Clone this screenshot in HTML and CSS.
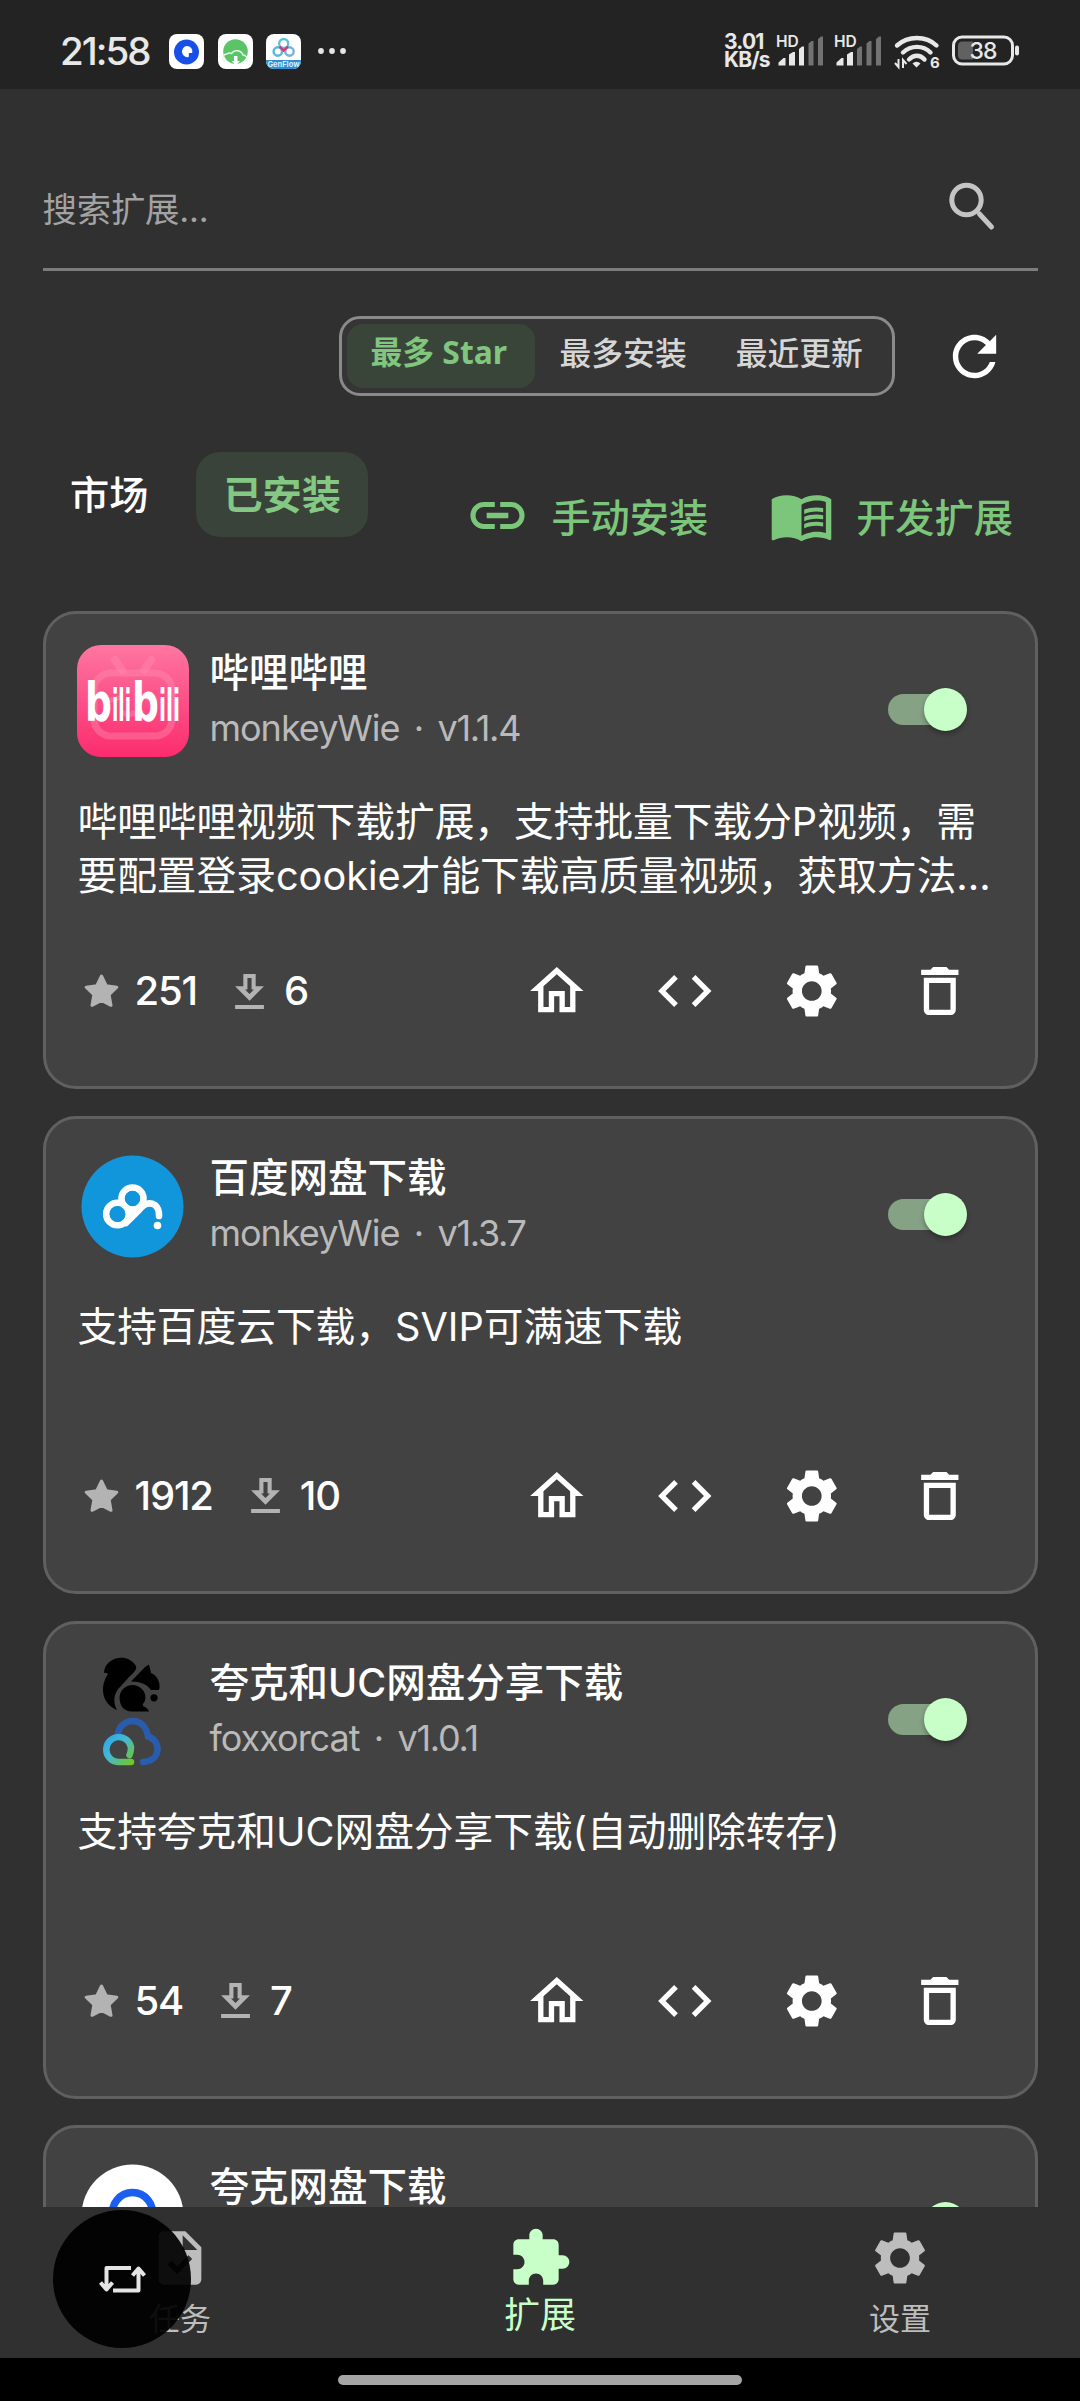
FILE: index.html
```html
<!DOCTYPE html>
<html lang="zh-CN">
<head>
<meta charset="utf-8">
<title>扩展</title>
<link rel="stylesheet" href="styles.css">
</head>
<body>
<svg class="sprite" aria-hidden="true">
  <symbol id="i-home" viewBox="0 0 24 24"><path d="M12 5.69l5 4.5V18h-2v-6H9v6H7v-7.81l5-4.5M12 3L2 12h3v8h6v-6h2v6h6v-8h3L12 3z"/></symbol>
  <symbol id="i-code" viewBox="0 0 24 24"><path d="M9.4 16.6L4.8 12l4.6-4.6L8 6l-6 6 6 6 1.4-1.4zm5.2 0l4.6-4.6-4.6-4.6L16 6l6 6-6 6-1.4-1.4z"/></symbol>
  <symbol id="i-gear" viewBox="0 0 24 24"><path d="M19.14 12.94c.04-.3.06-.61.06-.94 0-.32-.02-.64-.07-.94l2.03-1.58c.18-.14.23-.41.12-.61l-1.92-3.32c-.12-.22-.37-.29-.59-.22l-2.39.96c-.5-.38-1.03-.7-1.62-.94l-.36-2.54c-.04-.24-.24-.41-.48-.41h-3.84c-.24 0-.43.17-.47.41l-.36 2.54c-.59.24-1.13.57-1.62.94l-2.39-.96c-.22-.08-.47 0-.59.22L2.74 8.87c-.12.21-.08.47.12.61l2.03 1.58c-.05.3-.09.63-.09.94s.02.64.07.94l-2.03 1.58c-.18.14-.23.41-.12.61l1.92 3.32c.12.22.37.29.59.22l2.39-.96c.5.38 1.03.7 1.62.94l.36 2.54c.05.24.24.41.48.41h3.84c.24 0 .44-.17.47-.41l.36-2.54c.59-.24 1.13-.56 1.62-.94l2.39.96c.22.08.47 0 .59-.22l1.92-3.32c.12-.22.07-.47-.12-.61l-2.01-1.58zM12 15.7c-2.05 0-3.7-1.65-3.7-3.7s1.65-3.7 3.7-3.7 3.7 1.65 3.7 3.7-1.65 3.7-3.7 3.7z"/></symbol>
  <symbol id="i-trash" viewBox="0 0 24 24"><path d="M6 19c0 1.1.9 2 2 2h8c1.1 0 2-.9 2-2V7H6v12zM8 9h8v10H8V9zm7.5-5l-1-1h-5l-1 1H5v2h14V4z"/></symbol>
  <symbol id="i-star" viewBox="0 0 35 34"><path d="M17.5 2l4.7 9.7 10.6 1.5-7.7 7.4 1.9 10.7-9.5-5-9.5 5 1.9-10.700L2.200 13.200l10.600-1.500z" stroke="currentColor" stroke-width="3" stroke-linejoin="round"/></symbol>
  <symbol id="i-down" viewBox="5 3 14 17"><path d="M19 9h-4V3H9v6H5l7 7 7-7zm-8 1.500V5h2v5.500h1.170L12 12.670 9.830 10.500H11zM5 18h14v2H5z"/></symbol>
</svg>

<div class="phone">
  <header class="status">
    <span class="clock">21:58</span>
    <div class="notif">
      <svg width="35" height="35" viewBox="0 0 35 35"><rect width="35" height="35" rx="8" fill="#fff"/><circle cx="17.5" cy="18" r="12.5" fill="#1650e8"/><path d="M17.5 12a5.600 5.600 0 1 0 2.300 11v-4h3.500A5.600 5.600 0 0 0 17.500 12z" fill="#fff"/></svg>
      <svg width="35" height="35" viewBox="0 0 35 35"><rect width="35" height="35" rx="8" fill="#fff"/><circle cx="17.5" cy="17.5" r="12.3" fill="#5cc468"/><path d="M7 27.500a4 4 0 0 1 2-7.500 4 4 0 0 1 4.500-.5 6.500 6.500 0 0 1 11.500 1.500 4 4 0 0 1 3.500 6" fill="none" stroke="#e9f9ea" stroke-width="1.4"/><path d="M16 22h3.500v5h2.500l-4.200 4.500-4.200-4.500H16z" fill="#fff"/></svg>
      <svg width="35" height="35" viewBox="0 0 35 35"><defs><clipPath id="gf"><rect width="35" height="35" rx="8"/></clipPath></defs><g clip-path="url(#gf)"><rect width="35" height="35" fill="#fff"/><rect y="26" width="35" height="9" fill="#2f8fd0"/><g fill="none" stroke-width="2.4"><circle cx="11.8" cy="17.5" r="4.2" stroke="#58b8dc"/><circle cx="23.5" cy="17.5" r="4.2" stroke="#7aaee0"/><circle cx="17.7" cy="9.5" r="4.5" stroke="#5cc3d6"/><path d="M13.500 12.500l4.200 4 4.200-4" stroke="#cf3a78"/></g><text x="17.5" y="33" text-anchor="middle" class="gf-text">GenFlow</text></g></svg>
      <svg class="more" width="28" height="8" viewBox="0 0 28 8" fill="#e6e6e6"><circle cx="3" cy="4" r="2.9"/><circle cx="14" cy="4" r="2.9"/><circle cx="25" cy="4" r="2.9"/></svg>
    </div>
    <div class="sys">
      <div class="speed"><span>3.01</span><span>KB/s</span></div>
      <svg class="sig" width="50" height="34" viewBox="0 0 50 34"><text x="0" y="12.5" class="hd">HD</text><g fill="#e8e8e8"><path d="M2.500 31.500v-3l5-4.500h2v7.500zM13 31.500V20.500l4-2.500h2v13.500zM23 31.500V15l3-2.500h2v19z"/></g><g fill="#727272"><path d="M32.500 31.500V9.500l3-2.500h2v24.500zM42 31.500V5l3-2.500h2v29z"/></g></svg>
      <svg class="sig" width="50" height="34" viewBox="0 0 50 34"><text x="0" y="12.5" class="hd">HD</text><g fill="#e8e8e8"><path d="M2.500 31.500v-3l5-4.500h2v7.500zM13 31.500V20.500l4-2.500h2v13.500z"/></g><g fill="#727272"><path d="M23 31.500V15l3-2.500h2v19zM32.500 31.500V9.500l3-2.500h2v24.500zM42 31.500V5l3-2.500h2v29z"/></g></svg>
      <svg class="wifi" width="46" height="35" viewBox="0 0 46 35"><g fill="none" stroke="#e8e8e8" stroke-width="4.4" stroke-linecap="round"><path d="M3 11.500C14 1.500 32 1.500 42.500 11.500"/><path d="M9 18.500C17 11 29 11 36.500 18.500"/><path d="M15 25.500C20 20.500 26 20.500 30.500 25.500"/></g><path d="M18.500 29.500a5.600 5.600 0 0 1 8 0l-4 4z" fill="#e8e8e8"/><path d="M4.500 25v8l-3.500-4M9 34v-8l3.500 4" fill="none" stroke="#e8e8e8" stroke-width="2"/><text x="36" y="34" class="six">6</text></svg>
      <svg class="batt" width="68" height="32" viewBox="0 0 68 32"><rect x="1.5" y="2" width="59" height="27" rx="8.5" fill="none" stroke="#e8e8e8" stroke-width="3"/><path d="M6 11q0-4.500 4.500-4.500H21v18H10.500Q6 24.500 6 20z" fill="#616161"/><rect x="63" y="10.5" width="4" height="10" rx="2" fill="#e8e8e8"/><text x="31" y="24.3" text-anchor="middle" class="pct">38</text></svg>
    </div>
  </header>

  <main class="page">
    <div class="search">
      <span class="placeholder">搜索扩展...</span>
      <svg class="mag" width="48" height="50" viewBox="0 0 48 50" fill="none" stroke="#c4c4c4" stroke-width="5"><circle cx="18.5" cy="19" r="14.7"/><path d="M31.500 33l12 13" stroke-linecap="round"/></svg>
    </div>

    <div class="filters">
      <div class="segment">
        <span class="seg on">最多 Star</span>
        <span class="seg">最多安装</span>
        <span class="seg">最近更新</span>
      </div>
      <svg class="refresh" viewBox="0 0 24 24" fill="#fff"><path d="M17.650 6.350C16.200 4.900 14.210 4 12 4c-4.420 0-7.990 3.580-7.990 8s3.570 8 7.990 8c3.730 0 6.840-2.550 7.730-6h-2.080c-.82 2.330-3.040 4-5.650 4-3.310 0-6-2.690-6-6s2.690-6 6-6c1.660 0 3.140.69 4.220 1.780L13 11h7V4l-2.350 2.350z"/></svg>
    </div>

    <div class="tabs">
      <span class="tab">市场</span>
      <span class="tab on">已安装</span>
      <a class="link manual"><svg viewBox="0 0 24 24"><path d="M3.900 12c0-1.710 1.390-3.100 3.100-3.100h4V7H7c-2.760 0-5 2.240-5 5s2.240 5 5 5h4v-1.900H7c-1.710 0-3.100-1.390-3.100-3.100zM8 13h8v-2H8v2zm9-6h-4v1.900h4c1.710 0 3.100 1.390 3.100 3.100s-1.390 3.100-3.100 3.100h-4V17h4c2.760 0 5-2.240 5-5s-2.240-5-5-5z"/></svg>手动安装</a>
      <a class="link dev"><svg viewBox="0 0 24 24"><path d="M21 5c-1.110-.35-2.330-.5-3.500-.5-1.950 0-4.050.4-5.500 1.500-1.450-1.100-3.550-1.500-5.500-1.500S2.450 4.900 1 6v14.650c0 .25.25.5.5.5.1 0 .15-.05.25-.05C3.100 20.450 5.050 20 6.500 20c1.950 0 4.050.4 5.500 1.500 1.350-.85 3.800-1.500 5.500-1.500 1.650 0 3.350.3 4.750 1.050.1.05.15.05.25.05.25 0 .5-.25.5-.5V6c-.6-.45-1.250-.75-2-1zm0 13.500c-1.100-.35-2.300-.5-3.500-.5-1.700 0-4.150.65-5.500 1.500V8c1.350-.85 3.800-1.500 5.500-1.500 1.200 0 2.400.15 3.500.5v11.500z"/><path d="M17.500 10.500c.88 0 1.730.09 2.500.26V9.240c-.79-.15-1.640-.24-2.500-.24-1.700 0-3.240.29-4.500.83v1.660c1.130-.64 2.700-.99 4.500-.99zM13 12.490v1.660c1.130-.64 2.700-.99 4.500-.99.88 0 1.730.09 2.500.26V11.900c-.79-.15-1.640-.24-2.500-.24-1.700 0-3.240.3-4.500.83zM17.500 14.330c-1.700 0-3.240.29-4.500.83v1.660c1.130-.64 2.700-.99 4.500-.99.88 0 1.730.09 2.500.26v-1.520c-.79-.16-1.640-.24-2.500-.24z"/></svg>开发扩展</a>
    </div>

    <section class="list">
      <article class="card">
        <div class="head">
          <svg class="logo" viewBox="0 0 112 112"><defs><linearGradient id="bg" x1="0" y1="0" x2="0" y2="1"><stop offset="0" stop-color="#ff76a1"/><stop offset=".5" stop-color="#fb5088"/><stop offset="1" stop-color="#fd2c6d"/></linearGradient></defs><rect width="112" height="112" rx="24" fill="url(#bg)"/><g fill="none" stroke="#ff8fb2" stroke-opacity=".4" stroke-width="7" stroke-linecap="round"><rect x="17" y="28" width="78" height="63" rx="17"/><path d="M38 15l7 10M74 15l-7 10" stroke-width="8"/><path d="M34 55l8-2M70 53l8 2M47 68q4 4 9 0q5 4 9 0" stroke-width="5"/></g><text class="bili" y="76"><tspan class="b" x="8" textLength="27" lengthAdjust="spacingAndGlyphs">b</tspan><tspan x="35" textLength="19" lengthAdjust="spacingAndGlyphs">ili</tspan><tspan class="b" x="55" textLength="27" lengthAdjust="spacingAndGlyphs">b</tspan><tspan x="82" textLength="21" lengthAdjust="spacingAndGlyphs">ili</tspan></text></svg>
          <div class="names"><h2>哔哩哔哩</h2><p><span>monkeyWie</span><i>·</i><span class="ver">v1.1.4</span></p></div>
          <span class="switch"></span>
        </div>
        <p class="desc">哔哩哔哩视频下载扩展，支持批量下载分P视频，需<br>要配置登录cookie才能下载高质量视频，获取方法...</p>
        <div class="foot">
          <svg class="star"><use href="#i-star"/></svg><b>251</b><svg class="down"><use href="#i-down"/></svg><b>6</b>
          <div class="acts"><svg><use href="#i-home"/></svg><svg><use href="#i-code"/></svg><svg><use href="#i-gear"/></svg><svg><use href="#i-trash"/></svg></div>
        </div>
      </article>

      <article class="card">
        <div class="head">
          <svg class="logo" viewBox="0 0 112 112"><circle cx="55.5" cy="56.5" r="51" fill="#1296db"/><g fill="none" stroke="#fff" stroke-width="6.6" stroke-linecap="round"><circle cx="55.5" cy="48.500" r="11"/><circle cx="40.500" cy="64" r="11.300"/><path d="M49 73L62 60Q70 50 78 55Q82.500 59 82 66"/></g><path d="M47 58l5 4 10-4 2 2-13 13z" fill="#fff"/><circle cx="55.500" cy="48.500" r="7.600" fill="#1296db"/><circle cx="40.500" cy="64" r="7.800" fill="#1296db"/><circle cx="80.500" cy="75.500" r="3.800" fill="#fff"/></svg>
          <div class="names"><h2>百度网盘下载</h2><p><span>monkeyWie</span><i>·</i><span class="ver">v1.3.7</span></p></div>
          <span class="switch"></span>
        </div>
        <p class="desc">支持百度云下载，SVIP可满速下载</p>
        <div class="foot">
          <svg class="star"><use href="#i-star"/></svg><b>1912</b><svg class="down"><use href="#i-down"/></svg><b>10</b>
          <div class="acts"><svg><use href="#i-home"/></svg><svg><use href="#i-code"/></svg><svg><use href="#i-gear"/></svg><svg><use href="#i-trash"/></svg></div>
        </div>
      </article>

      <article class="card">
        <div class="head">
          <svg class="logo" viewBox="0 0 112 112"><defs><linearGradient id="q" x1="0" y1="0" x2="1" y2="1"><stop offset="0" stop-color="#2fa8ea"/><stop offset=".45" stop-color="#45b8d0"/><stop offset="1" stop-color="#6cc832"/></linearGradient></defs><path d="M27 18C27 3 50-4 59 11C60 14 57 18 53 21L44 31C36 38 36 48 40 55C25 49 22 32 31 19Q29 17 27 18z"/><path d="M54 26.500L68 12L72 9.500L74 18C81 21 84 29 82 35H74Q69 26.500 54 26.500z"/><path d="M42.500 43a13 13 0 0 1 26 0Q68.500 46 66 49q-1 2 2 3 3 1 4 4.500H55Q43 56 42.500 43z"/><circle cx="77" cy="42.800" r="3.600"/><path d="M41 78C44 63 68 60 71 81.500C84 85 85 106 66 107" fill="none" stroke="#2a5cae" stroke-width="6.500" stroke-linecap="round"/><path d="M52.500 100Q54 97 54 92A12.500 12.500 0 1 0 41 107H54" fill="none" stroke="url(#q)" stroke-width="6.500" stroke-linecap="round"/></svg>
          <div class="names"><h2>夸克和UC网盘分享下载</h2><p><span>foxxorcat</span><i>·</i><span class="ver">v1.0.1</span></p></div>
          <span class="switch"></span>
        </div>
        <p class="desc">支持夸克和UC网盘分享下载(自动删除转存)</p>
        <div class="foot">
          <svg class="star"><use href="#i-star"/></svg><b>54</b><svg class="down"><use href="#i-down"/></svg><b>7</b>
          <div class="acts"><svg><use href="#i-home"/></svg><svg><use href="#i-code"/></svg><svg><use href="#i-gear"/></svg><svg><use href="#i-trash"/></svg></div>
        </div>
      </article>

      <article class="card">
        <div class="head">
          <svg class="logo" viewBox="0 0 112 112"><circle cx="55.5" cy="56.5" r="51" fill="#fff"/><path d="M36 58a20 20 0 1 1 39 0" fill="none" stroke="#1a5ff0" stroke-width="7.500"/><path d="M33 58l4-6h7v7z" fill="#18a8e8"/></svg>
          <div class="names"><h2>夸克网盘下载</h2></div>
          <span class="switch"></span>
        </div>
      </article>
    </section>
  </main>

  <nav class="nav">
    <div class="item"><svg viewBox="0 0 24 24"><path d="M14 2H6c-1.100 0-1.990.9-1.990 2L4 20c0 1.100.89 2 1.990 2H18c1.100 0 2-.9 2-2V8l-6-6zm-3.060 16L7.400 14.460l1.410-1.410 2.120 2.120 4.240-4.240 1.410 1.410L10.940 18zM13 9V3.500L18.500 9H13z"/></svg><span>任务</span></div>
    <div class="item active"><svg viewBox="0 0 24 24"><path d="M20.500 11H19V7c0-1.100-.9-2-2-2h-4V3.500C13 2.120 11.880 1 10.500 1S8 2.120 8 3.500V5H4c-1.100 0-1.990.9-1.990 2v3.800H3.500c1.490 0 2.700 1.210 2.700 2.700s-1.210 2.700-2.700 2.700H2V20c0 1.100.9 2 2 2h3.800v-1.500c0-1.490 1.210-2.700 2.700-2.700 1.490 0 2.700 1.210 2.700 2.700V22H17c1.100 0 2-.9 2-2v-4h1.500c1.380 0 2.500-1.120 2.500-2.500S21.880 11 20.500 11z"/></svg><span>扩展</span></div>
    <div class="item"><svg><use href="#i-gear"/></svg><span>设置</span></div>
  </nav>
  <div class="homebar"><span></span></div>

  <div class="float"><svg width="48" height="28" viewBox="0 0 48 28" fill="none" stroke="#e4e4e4" stroke-width="4"><path d="M33 3H8.500v20M2.500 17.500l6 7 6-7M15 25.500h25.500V5M34.500 10.500l6-7 6 7" stroke-linejoin="round"/></svg></div>
</div>
</body>
</html>
```

FILE: styles.css
```css
* { box-sizing: border-box; }
body {
  margin: 0;
  background: #303030;
  color: #fff;
  font-family: Inter, "Noto Sans CJK SC", sans-serif;
}
h2, p { margin: 0; }
svg { display: block; flex: none; }
.sprite { position: absolute; width: 0; height: 0; }

.phone {
  position: relative;
  width: 1080px;
  height: 2401px;
  display: flex;
  flex-direction: column;
  overflow: hidden;
}

/* status bar */
.status {
  height: 89px;
  flex: none;
  display: flex;
  align-items: center;
  padding: 13px 60px 0 60px;
  background: #232323;
}
.clock {
  width: 109px;
  font: 500 38.5px/48px Inter, sans-serif;
  letter-spacing: -2px;
  color: #e8e8e8;
  white-space: nowrap;
}
.notif { display: flex; align-items: center; gap: 13.5px; }
.notif .more { margin-left: 3px; }
.gf-text { font: 700 7.5px Inter, sans-serif; fill: #d8f0ff; }
.sys { margin-left: auto; display: flex; align-items: center; }
.sys svg { overflow: visible; }
.speed {
  width: 52px;
  display: flex;
  flex-direction: column;
  font: 700 21px/18px Inter, sans-serif;
  letter-spacing: -.8px;
  color: #e8e8e8;
}
.sig { margin-right: 8px; }
.hd { font: 600 15.5px Inter, sans-serif; fill: #e8e8e8; }
.wifi { margin: 0 12px 0 2px; }
.six { font: 700 15px Inter, sans-serif; fill: #e8e8e8; }
.pct { font: 500 23px Inter, sans-serif; fill: #e8e8e8; letter-spacing: -1px; }

/* page */
.page {
  height: 2118px;
  flex: none;
  overflow: hidden;
  padding: 0 42.5px;
}
.search {
  height: 182px;
  display: flex;
  align-items: center;
  justify-content: space-between;
  padding: 62px 42px 0 0;
  border-bottom: 3px solid #7c7c7c;
}
.placeholder { font-size: 34.4px; line-height: 50px; letter-spacing: -.2px; color: #a3a3a3; }
.mag { margin-top: -8px; }

.filters {
  display: flex;
  align-items: center;
  justify-content: flex-end;
  margin-top: 45px;
  padding-right: 31px;
  gap: 47px;
}
.segment {
  width: 556px;
  height: 80px;
  display: flex;
  align-items: center;
  padding-left: 5px;
  border: 3px solid #8a8a8a;
  border-radius: 21px;
  background: #353535;
}
.seg {
  height: 64px;
  padding: 0 24px 0 25px;
  border-radius: 16px;
  font: 500 31.8px/54px "Noto Sans CJK SC", sans-serif;
  color: #d6d6d6;
  white-space: nowrap;
}
.seg.on {
  width: 188px;
  padding: 0 0 0 24px;
  background: #3a4539;
  color: #80c67f;
  font-weight: 700;
  line-height: 56px;
  font-family: "Noto Sans", "Noto Sans CJK SC", sans-serif;
}
.refresh { width: 65px; height: 65px; }

.tabs {
  display: flex;
  height: 85px;
  margin-top: 56px;
  font: 500 39.2px/81px "Noto Sans CJK SC", sans-serif;
}
.tab { padding: 0 48px 0 27.5px; }
.tab.on {
  width: 172px;
  padding: 0 0 0 27px;
  border-radius: 24px;
  background: #3a4339;
  color: #83c883;
  font-weight: 700;
}
.link { display: flex; align-items: center; height: 65px; margin-top: 31px; line-height: 65px; color: #7cc67b; }
.link svg { width: 65px; height: 65px; fill: currentColor; }
.manual { margin-left: 97px; gap: 21px; }
.dev { margin-left: 61px; gap: 22px; }

/* cards */
.list { display: flex; flex-direction: column; gap: 26.4px; margin-top: 74px; }
.card {
  height: 478.4px;
  flex: none;
  padding: 31px;
  border: 3px solid #606060;
  border-radius: 33px;
  background: #424242;
}
.head { display: flex; height: 112px; }
.logo { width: 112px; height: 112px; overflow: visible; }
.bili { font: 700 44px "DejaVu Sans", sans-serif; fill: #fff; }
.bili .b { font-size: 53px; }
.names { margin-left: 21px; flex: 1; padding-top: 3px; }
.names h2 { font-size: 39.5px; font-weight: 500; line-height: 50px; }
.names p {
  display: flex;
  margin-top: 5px;
  font-size: 36px;
  line-height: 50px;
  letter-spacing: -1px;
  color: #bababa;
}
.names i { width: 38px; text-align: center; font-style: normal; }
.names .ver { letter-spacing: -1.3px; }
.switch {
  position: relative;
  width: 79px;
  height: 31px;
  margin: 49px 37px 0 0;
}
.switch::before {
  content: "";
  display: block;
  width: 73px;
  height: 31px;
  border-radius: 16px;
  background: #85a285;
}
.switch::after {
  content: "";
  position: absolute;
  right: 0;
  top: -6px;
  width: 43px;
  height: 43px;
  border-radius: 50%;
  background: #c8ffc8;
  box-shadow: 0 3px 5px rgba(0, 0, 0, .3);
}
.desc {
  height: 107px;
  margin: 39px 0 0 1px;
  font-size: 39.7px;
  line-height: 53.5px;
  white-space: nowrap;
}
.foot { display: flex; align-items: center; height: 64px; margin-top: 56px; padding-left: 7px; }
.foot b { font-weight: 500; font-size: 40px; letter-spacing: -1.2px; line-height: 64px; }
.star { width: 35px; height: 34px; color: #b3b3b3; fill: #b3b3b3; margin-right: 16px; }
.down { width: 29px; height: 35px; fill: #b3b3b3; margin: 0 20px 0 38px; }
.acts { display: flex; margin-left: auto; }
.acts svg { width: 127.6px; height: 64px; fill: #fff; }

/* bottom navigation */
.nav { display: flex; height: 151px; flex: none; background: #303030; }
.item { flex: 1; display: flex; flex-direction: column; align-items: center; padding-top: 18.5px; color: #bdbdbd; }
.item svg { width: 64px; height: 64px; fill: currentColor; }
.item span { margin-top: 9px; font-size: 31px; line-height: 40px; }
.item.active { color: #c8ffc8; }
.item.active span { margin-top: 5px; font-size: 36px; }
.homebar { flex: 1; background: #000; padding-top: 17px; }
.homebar span { display: block; width: 404px; height: 10px; margin: 0 auto; border-radius: 5px; background: #a5a5a5; }

.float {
  position: absolute;
  left: 53px;
  top: 2209.5px;
  width: 138px;
  height: 138px;
  border-radius: 50%;
  display: grid;
  place-items: center;
  background: rgba(0, 0, 0, .93);
}
```
